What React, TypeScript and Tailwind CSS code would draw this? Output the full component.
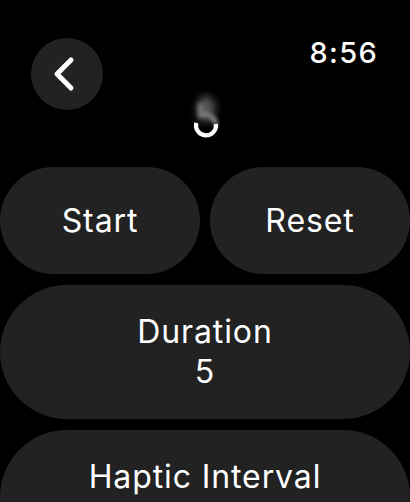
export default function App() {
  return (
    <div
      className="w-[410px] h-[502px] bg-black text-white overflow-hidden"
      style={{ fontFamily: "Inter, 'Noto Sans', sans-serif" }}
    >
      <div className="flex items-start justify-between h-[167px] pt-[38px] pl-[31px] pr-[32px]">
        <button className="flex items-center justify-center w-[72px] h-[72px] rounded-full bg-[#222222]">
          <svg width="72" height="72" viewBox="0 0 72 72" fill="none">
            <path
              d="M40 22 L26 36 L40 50"
              stroke="white"
              strokeWidth="5"
              strokeLinecap="round"
              strokeLinejoin="round"
            />
          </svg>
        </button>

        <div className="flex-1 flex justify-center pt-[52px]">
          {/* page indicator: blurred digit rolling into place */}
          <svg width="40" height="50" viewBox="0 0 40 50" fill="none">
            <defs>
              <filter id="glow" x="-80%" y="-80%" width="260%" height="260%">
                <feGaussianBlur stdDeviation="4.5" />
              </filter>
              <filter id="soft" x="-80%" y="-80%" width="260%" height="260%">
                <feGaussianBlur stdDeviation="2.2" />
              </filter>
            </defs>
            <ellipse cx="20" cy="19" rx="9" ry="13" fill="white" opacity="0.35" filter="url(#glow)" />
            <path d="M14 13 L14 26 C17 24 22 24 25 27" stroke="white" strokeWidth="4" opacity="0.35" filter="url(#soft)" />
            <path
              d="M25 26.84 A10 10 0 0 1 30 35.5"
              stroke="white"
              strokeWidth="4"
              opacity="0.6"
              filter="url(#soft)"
            />
            <path
              d="M29.9 34 A10 10 0 1 1 10.34 32.91"
              stroke="white"
              strokeWidth="4.2"
            />
          </svg>
        </div>

        <div className="text-[29px] leading-none font-medium tracking-[0.045em]">8:56</div>
      </div>

      <div className="flex flex-col gap-[11px]">
        <div className="flex gap-[10px]">
          <button className="flex-1 h-[107px] rounded-full bg-[#222222] text-[32px] tracking-[0.028em]">
            Start
          </button>
          <button className="flex-1 h-[107px] rounded-full bg-[#222222] text-[32px] tracking-[0.028em]">
            Reset
          </button>
        </div>

        <button className="h-[134px] rounded-full bg-[#222222] text-[32px] tracking-[0.028em] leading-[40px] flex flex-col items-center justify-center">
          <span>Duration</span>
          <span>5</span>
        </button>

        <button className="h-[134px] rounded-full bg-[#222222] text-[32px] tracking-[0.028em] leading-[40px] flex flex-col items-center justify-center">
          <span>Haptic Interval</span>
          <span>1</span>
        </button>
      </div>
    </div>
  );
}
